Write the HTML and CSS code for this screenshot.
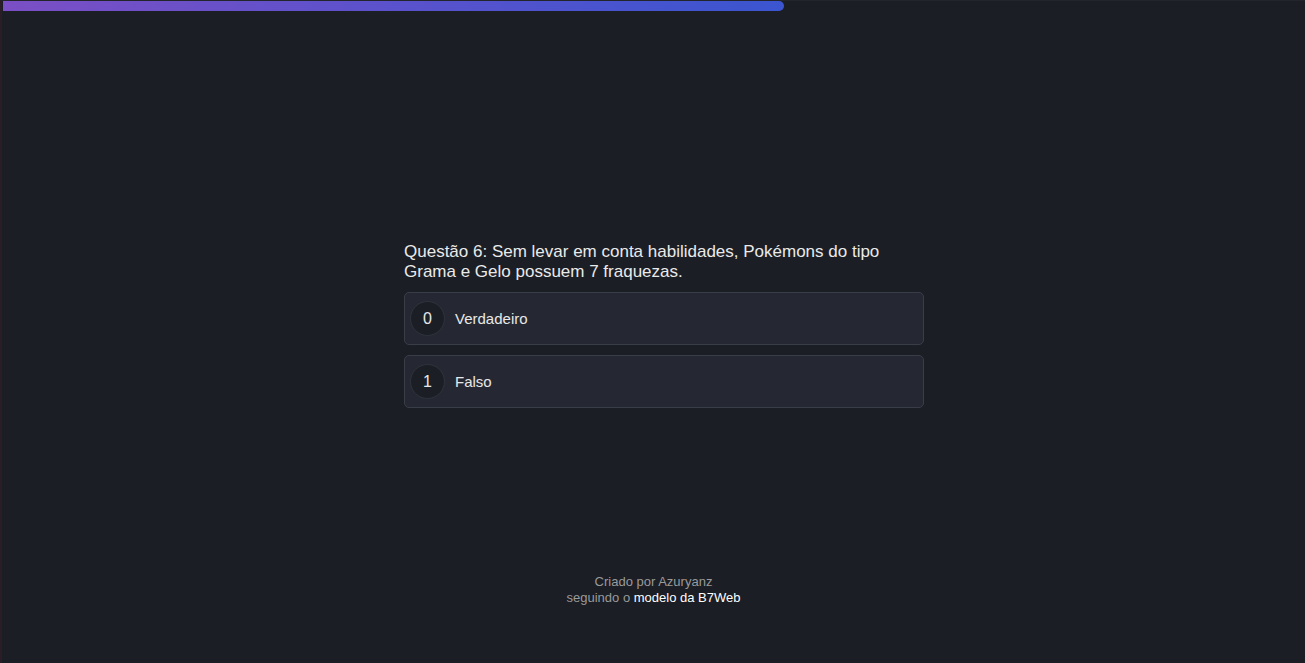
FILE: index.html
```html
<!DOCTYPE html>
<html lang="pt-BR">
<head>
<meta charset="utf-8">
<title>Quiz</title>
<link rel="stylesheet" href="styles.css">
</head>
<body>
<div class="page">
  <div class="progress"><div class="progress-fill" style="width: 781px"></div></div>
  <main class="quiz">
    <h1 class="question">Questão 6: Sem levar em conta habilidades, Pokémons do tipo Grama e Gelo possuem 7 fraquezas.</h1>
    <div class="options">
      <div class="option"><span class="num">0</span><span class="label">Verdadeiro</span></div>
      <div class="option"><span class="num">1</span><span class="label">Falso</span></div>
    </div>
  </main>
  <footer class="footer">
    <div>Criado por Azuryanz</div>
    <div>seguindo o <a href="#" class="link">modelo da B7Web</a></div>
  </footer>
</div>
</body>
</html>
```

FILE: styles.css
```css
html, body {
  margin: 0;
  padding: 0;
  height: 100%;
  background: #1b1e25;
}
body {
  font-family: "Liberation Sans", Arial, sans-serif;
  color: #e6e6e6;
}
.page {
  height: 100%;
  border-left: 2px solid #2a1d25;
  border-top: 1px solid #22252c;
  box-sizing: border-box;
  overflow: hidden;
}
.progress {
  height: 10px;
  padding-left: 1px;
}
.progress-fill {
  height: 10px;
  background: linear-gradient(90deg, #7b4fc5 0%, #5a52cc 50%, #3b55d0 100%);
  border-radius: 0 5px 5px 0;
}
.quiz {
  width: 520px;
  margin: 231px 0 0 402px;
}
.question {
  margin: 0;
  font-size: 17px;
  font-weight: normal;
  line-height: 20px;
  color: #eaeaea;
  width: 500px;
}
.options {
  margin-top: 10px;
  display: flex;
  flex-direction: column;
  gap: 10px;
}
.option {
  height: 53px;
  box-sizing: border-box;
  background: #252832;
  border: 1px solid #393d47;
  border-radius: 5px;
  display: flex;
  align-items: center;
  padding-left: 5px;
}
.num {
  width: 35px;
  height: 35px;
  box-sizing: border-box;
  border-radius: 50%;
  background: #1b1e25;
  border: 1px solid #2f333b;
  display: flex;
  align-items: center;
  justify-content: center;
  font-size: 16px;
  color: #e8e8e8;
}
.label {
  margin-left: 10px;
  font-size: 15px;
  color: #e8e8e8;
}
.footer {
  margin-top: 166px;
  text-align: center;
  font-size: 13px;
  line-height: 16px;
  color: #9a9a9a;
}
.link {
  color: #ffffff;
  text-decoration: none;
}
```
